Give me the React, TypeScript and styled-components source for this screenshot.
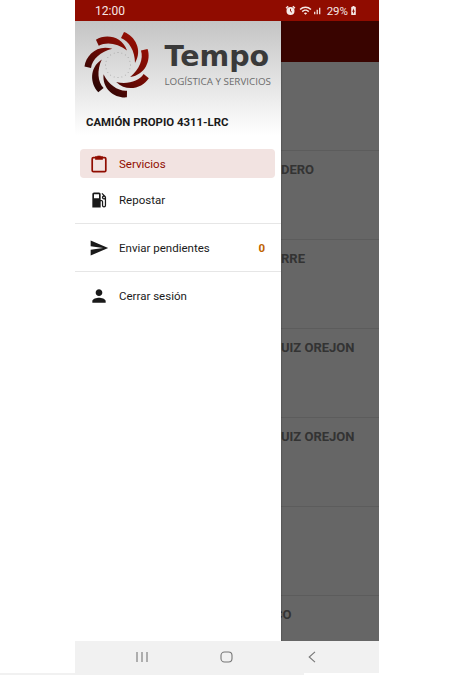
import React from "react";
import styled, { createGlobalStyle } from "styled-components";
import {
  MdLocalGasStation,
  MdSend,
  MdPerson,
  MdWifi,
  MdSignalCellularAlt,
  MdBatteryChargingFull,
} from "react-icons/md";

const GlobalStyle = createGlobalStyle`
  html, body {
    margin: 0;
    padding: 0;
    background: #fff;
    font-family: Roboto, "Liberation Sans", sans-serif;
  }
`;

const Page = styled.div`
  width: 463px;
  height: 675px;
  overflow: hidden;
  display: flex;
  flex-direction: column;
`;

const Phone = styled.div`
  width: 304px;
  height: 673px;
  margin-left: 75px;
  display: flex;
  flex-direction: column;
`;

const BottomStrip = styled.div`
  width: 304px;
  height: 2px;
  background: #f1f1f1;
`;

const StatusBar = styled.div`
  height: 21px;
  flex: none;
  background: #900c00;
  color: #f6e9e6;
  display: flex;
  align-items: center;
  justify-content: space-between;
  padding: 0 20px;
  font-size: 12px;
`;

const StatusIcons = styled.div`
  display: flex;
  align-items: center;
  font-size: 11.5px;
`;

const StatusWifi = styled.span`
  display: flex;
  margin-left: 3px;
`;

const StatusPercent = styled.span`
  margin-left: 5px;
`;

const Screen = styled.div`
  position: relative;
  flex: 1;
  overflow: hidden;
  background: #fff;
`;

const AppBar = styled.div`
  height: 41px;
  background: #900c00;
`;

const Row = styled.div<{ $start: number }>`
  height: 88px;
  border-bottom: 1px solid #e6e6e6;
  padding-left: ${(p) => p.$start}px;
  color: #808080;
  font-size: 13px;
  font-weight: 700;
  line-height: 14px;
  white-space: nowrap;
`;

const RowText = styled.div`
  padding-top: 12px;
`;

const Backdrop = styled.div`
  position: absolute;
  inset: 0;
  background: rgba(0, 0, 0, 0.6);
`;

const Drawer = styled.nav`
  position: absolute;
  top: 0;
  left: 0;
  bottom: 0;
  width: 206px;
  background: #fff;
  box-shadow: 1px 0 1px rgba(0, 0, 0, 0.12);
`;

const DrawerHeader = styled.div`
  height: 114px;
  background: linear-gradient(#c4c4c4, #fff);
  padding: 8px 0 0 11px;
  box-sizing: border-box;
`;

const Brand = styled.div`
  display: flex;
  height: 72px;
  margin-left: -4.5px;
`;

const BrandText = styled.div`
  margin-left: 11px;
  padding-top: 11px;
  display: flex;
  flex-direction: column;
`;

const BrandName = styled.div`
  font-family: "DejaVu Sans", sans-serif;
  font-weight: 700;
  font-size: 28.5px;
  line-height: 34px;
  color: #3a3a3a;
`;

const BrandTagline = styled.div`
  font-family: "Open Sans", sans-serif;
  font-size: 9.8px;
  line-height: 14px;
  margin-top: 1px;
  color: #6b6b6b;
  white-space: nowrap;
`;

const VehicleName = styled.div`
  margin-top: 14px;
  font-size: 11.4px;
  font-weight: 700;
  line-height: 14px;
  color: #1a1a1a;
  white-space: nowrap;
`;

const Menu = styled.div`
  padding: 14px 6px 2px 5px;
`;

const Section = styled.div`
  border-top: 1px solid #e6e6e6;
  padding: 0 6px 0 5px;
`;

const Item = styled.div<{ $active?: boolean; $tall?: boolean }>`
  display: flex;
  align-items: center;
  height: ${(p) => (p.$tall ? 47 : 29)}px;
  margin-bottom: ${(p) => (p.$tall ? 0 : 7)}px;
  padding: 0 10px 0 9px;
  border-radius: 4px;
  background: ${(p) => (p.$active ? "#f2e3e1" : "transparent")};
  color: ${(p) => (p.$active ? "#900c00" : "#1a1a1a")};
  font-size: 11.5px;
  font-weight: 400;
`;

const ItemIcon = styled.span`
  width: 20px;
  height: 20px;
  flex: none;
  margin-right: 10px;
  display: flex;
`;

const ItemLabel = styled.span`
  flex: 1;
`;

const Count = styled.span`
  color: #c06400;
  font-weight: 700;
`;

const NavBar = styled.div`
  height: 32px;
  flex: none;
  background: #f1f1f1;
  padding: 0 25px 0 24px;
  display: grid;
  grid-template-columns: repeat(3, 1fr);
  align-items: center;
  justify-items: center;
`;

const blades = [0, 1, 2, 3, 4, 5, 6];
const dots = Array.from({ length: 20 }, (_, i) => i);

const Logo = () => (
  <svg width="72" height="72" viewBox="-36 -36 72 72">
    <defs>
      <linearGradient id="swirl" x1="0.85" y1="0.1" x2="0.15" y2="0.9">
        <stop offset="0" stopColor="#9c1004" />
        <stop offset="0.5" stopColor="#6d0a04" />
        <stop offset="1" stopColor="#1f0505" />
      </linearGradient>
      <mask id="blades">
        {blades.map((i) => (
          <path
            key={i}
            transform={`rotate(${(i * 360) / 7})`}
            d="M6 -33 C17 -29 25 -15 17 -2 C17 -14 11 -24 3 -27 Z"
            fill="#fff"
          />
        ))}
      </mask>
    </defs>
    <rect x="-36" y="-36" width="72" height="72" fill="url(#swirl)" mask="url(#blades)" />
    {dots.map((i) => (
      <circle
        key={i}
        cx={Math.cos((i * Math.PI) / 10) * 12.5}
        cy={Math.sin((i * Math.PI) / 10) * 12.5}
        r="0.45"
        fill="#777"
      />
    ))}
  </svg>
);

const ClipboardIcon = () => (
  <svg width="20" height="20" viewBox="0 0 20 20" fill="none" stroke="currentColor" strokeWidth="1.7">
    <rect x="3.2" y="3.6" width="13.6" height="14" rx="1.2" />
    <path d="M7 3.2h6v1.8H7z" fill="currentColor" />
    <path d="M8.4 2.6h3.2" strokeWidth="1.8" />
  </svg>
);

const AlarmIcon = () => (
  <svg width="11" height="11" viewBox="0 0 11 11" fill="currentColor">
    <circle cx="5.5" cy="6" r="4" />
    <path d="M0.6 2.8 L2.6 0.8 L3.6 1.7 L1.5 3.7 Z M10.4 2.8 L8.4 0.8 L7.4 1.7 L9.5 3.7 Z" />
    <path d="M5.5 3.8 V6.2 L7 7.2" fill="none" stroke="#900c00" strokeWidth="0.9" />
  </svg>
);

const rows = [
  { start: 206, text: "" },
  { start: 206, text: "DERO" },
  { start: 206, text: "RRE" },
  { start: 206, text: "UIZ OREJON" },
  { start: 206, text: "UIZ OREJON" },
  { start: 206, text: "" },
  { start: 199, text: "CO" },
];

export default function App() {
  return (
    <Page>
      <GlobalStyle />
      <Phone>
        <StatusBar>
          <span>12:00</span>
          <StatusIcons>
            <AlarmIcon />
            <StatusWifi>
              <MdWifi size={13} />
            </StatusWifi>
            <MdSignalCellularAlt size={10} />
            <StatusPercent>29%</StatusPercent>
            <MdBatteryChargingFull size={11} />
          </StatusIcons>
        </StatusBar>
        <Screen>
          <AppBar />
          {rows.map((r, i) => (
            <Row key={i} $start={r.start}>
              <RowText>{r.text}</RowText>
            </Row>
          ))}
          <Backdrop />
          <Drawer>
            <DrawerHeader>
              <Brand>
                <Logo />
                <BrandText>
                  <BrandName>Tempo</BrandName>
                  <BrandTagline>LOGÍSTICA Y SERVICIOS</BrandTagline>
                </BrandText>
              </Brand>
              <VehicleName>CAMIÓN PROPIO 4311-LRC</VehicleName>
            </DrawerHeader>
            <Menu>
              <Item $active>
                <ItemIcon>
                  <ClipboardIcon />
                </ItemIcon>
                <ItemLabel>Servicios</ItemLabel>
              </Item>
              <Item>
                <ItemIcon>
                  <MdLocalGasStation size={20} />
                </ItemIcon>
                <ItemLabel>Repostar</ItemLabel>
              </Item>
            </Menu>
            <Section>
              <Item $tall>
                <ItemIcon>
                  <MdSend size={20} />
                </ItemIcon>
                <ItemLabel>Enviar pendientes</ItemLabel>
                <Count>0</Count>
              </Item>
            </Section>
            <Section>
              <Item $tall>
                <ItemIcon>
                  <MdPerson size={20} />
                </ItemIcon>
                <ItemLabel>Cerrar sesión</ItemLabel>
              </Item>
            </Section>
          </Drawer>
        </Screen>
        <NavBar>
          <svg width="12" height="12" viewBox="0 0 12 12" stroke="#777" strokeWidth="1.1">
            <path d="M1 1v10M6 1v10M11 1v10" />
          </svg>
          <svg width="13" height="12" viewBox="0 0 13 12" fill="none" stroke="#777" strokeWidth="1.1">
            <rect x="1" y="1" width="11" height="10" rx="3.5" />
          </svg>
          <svg width="8" height="12" viewBox="0 0 8 12" fill="none" stroke="#777" strokeWidth="1.1">
            <path d="M7 0.8 L1.2 6 L7 11.2" />
          </svg>
        </NavBar>
      </Phone>
      <BottomStrip />
    </Page>
  );
}
